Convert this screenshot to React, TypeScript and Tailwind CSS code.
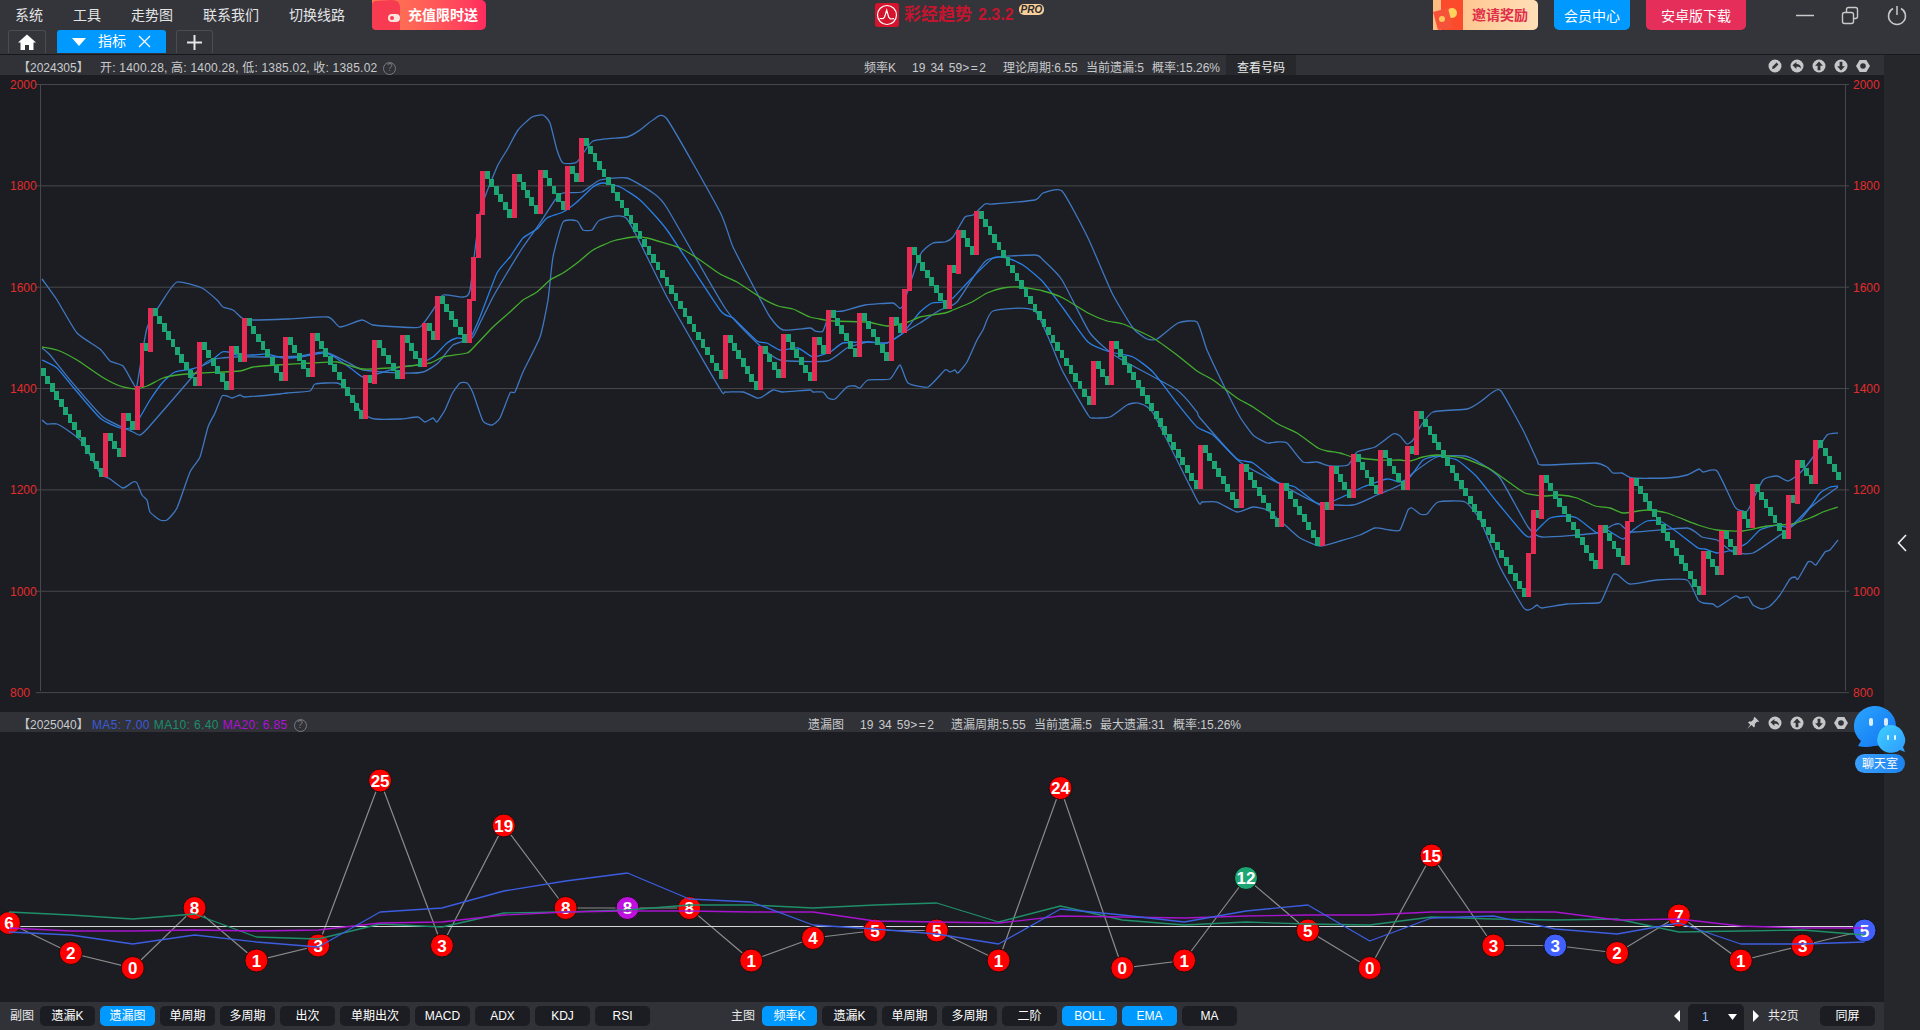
import type { ReactNode } from "react";

// renko bars: [left x, top y] of each rising column, everything falls between them
const RISES: [number, number][] = [
  [103.3, 433], [121.3, 413], [135, 386], [139.5, 343], [148.3, 308], [197, 342], [229, 346], [242.3, 318],
  [283.3, 337], [310, 333], [363, 375], [372, 340], [400, 335], [422, 323], [435, 296], [467, 299],
  [471.3, 257], [476, 214], [480.3, 171], [512, 174], [538, 170], [565, 166], [579, 138], [723, 335],
  [758, 346], [781, 334], [812, 337], [826, 310], [857, 313], [889, 317], [902, 289], [907, 247],
  [947, 265], [956, 230], [974, 211], [1091, 361], [1109, 341], [1198, 445], [1239, 464], [1279, 483],
  [1320, 502], [1329, 466], [1351, 454], [1378, 450], [1405, 446], [1414, 411], [1526, 553], [1531, 510],
  [1539, 475], [1598, 525], [1625, 521], [1629.3, 478], [1701, 551], [1719, 531], [1737, 511], [1750, 484],
  [1786, 495], [1795, 460], [1813, 440],
];
const COL = 4.55;
const RISE_H = 43.7;
const STEP_H = 8.4;

function fallingCols(fromX: number, fromTop: number, toX: number, toBottom: number) {
  const count = Math.round((toX - fromX) / COL);
  const cols: { x: number; y: number }[] = [];
  for (let i = 0; i < count; i++) {
    const t = count > 1 ? i / (count - 1) : 0;
    cols.push({ x: fromX + (i * (toX - fromX)) / count, y: fromTop + t * (toBottom - STEP_H - fromTop) });
  }
  return cols;
}

const FALLS = [
  ...fallingCols(40.7, 368, RISES[0][0], RISES[0][1] + RISE_H),
  ...RISES.slice(0, -1).flatMap(([x, top], i) =>
    fallingCols(x + COL, top, RISES[i + 1][0], RISES[i + 1][1] + RISE_H),
  ),
  ...fallingCols(1818, 440, 1841, 480),
];

// light catmull-rom through the traced points, tight enough to keep the band corners
function smooth(points: string) {
  const k = 11;
  const p = points.split(" ").map((s) => s.split(",").map(Number));
  let d = `M${p[0][0]} ${p[0][1]}`;
  for (let i = 0; i < p.length - 1; i++) {
    const a = p[Math.max(i - 1, 0)];
    const b = p[i];
    const c = p[i + 1];
    const e = p[Math.min(i + 2, p.length - 1)];
    d += `C${b[0] + (c[0] - a[0]) / k} ${b[1] + (c[1] - a[1]) / k} ${c[0] - (e[0] - b[0]) / k} ${c[1] - (e[1] - b[1]) / k} ${c[0]} ${c[1]}`;
  }
  return d;
}

const UPPER =
  "42,279 57,300 77,333 100,349 110,361 123,366 133,383 137,385 147,328 163,300 177,282 202,288 217,300 223,307 233,310 242,318 250,320 287,319 328,317 340,327 362,320 373,325 400,327 420,327 433,310 443,295 463,297 470,290 480,213 497,167 507,150 518,130 532,117 543,115 550,123 557,150 563,163 577,162 593,141 627,137 640,130 653,120 667,119 720,212 733,247 758,295 770,317 783,330 810,328 815,331 823,331 830,313 843,311 865,305 893,303 902,307 920,255 933,243 945,242 953,237 965,217 973,215 985,204 993,204 1035,200 1043,193 1062,191 1088,238 1112,293 1133,328 1147,339 1157,339 1178,323 1197,322 1207,350 1225,388 1240,417 1253,435 1267,443 1277,442 1287,443 1303,462 1317,462 1330,466 1348,465 1357,452 1375,447 1393,434 1400,436 1407,444 1413,440 1420,427 1433,412 1467,409 1480,402 1493,392 1501,391 1523,430 1537,460 1542,465 1595,463 1607,467 1613,473 1622,473 1632,478 1667,478 1687,475 1699,469 1703,472 1717,471 1735,507 1743,511 1748,510 1763,480 1777,476 1788,481 1800,473 1813,457 1827,435 1838,433";
const LOWER =
  "42,420 47,424 57,424 70,432 83,443 100,473 110,479 123,488 133,482 137,483 142,495 147,500 150,512 160,520 167,520 177,508 190,472 200,457 208,427 215,413 222,396 227,396 232,398 240,395 245,397 280,394 287,393 310,391 315,384 337,383 347,390 362,413 375,419 400,419 418,417 425,422 433,418 437,422 445,410 452,394 460,383 467,383 473,393 483,421 492,425 500,418 510,393 515,392 523,372 540,337 548,300 553,257 563,222 577,221 583,230 592,230 600,220 627,219 667,297 720,389 725,392 743,392 757,398 762,397 773,390 783,392 810,390 813,392 823,392 828,398 835,399 847,387 855,386 860,388 868,380 890,379 900,365 908,383 928,387 945,370 950,372 955,370 958,373 967,362 977,340 983,330 993,311 1035,311 1062,370 1088,415 1093,418 1110,417 1127,405 1138,403 1153,413 1197,500 1202,502 1217,502 1237,512 1253,507 1267,510 1285,525 1300,538 1320,546 1340,541 1360,535 1375,528 1390,530 1400,530 1408,510 1412,508 1420,514 1427,514 1438,502 1465,502 1480,520 1500,567 1523,607 1528,610 1533,608 1537,605 1542,608 1567,604 1597,603 1602,600 1613,575 1618,575 1630,584 1657,580 1687,580 1698,600 1703,603 1713,604 1718,607 1735,596 1740,598 1748,597 1753,605 1762,609 1770,606 1780,595 1790,579 1795,577 1798,579 1808,562 1812,562 1816,565 1825,552 1830,550 1838,540";
const MID_A =
  "42,360 57,368 73,387 100,418 120,428 130,428 140,417 150,400 163,382 175,372 192,369 208,363 222,352 228,352 237,355 253,355 267,354 283,358 300,357 323,353 333,356 353,370 363,377 377,374 400,367 417,365 433,357 447,343 457,338 470,338 480,317 497,273 510,257 523,238 537,229 547,218 563,212 577,202 593,187 603,183 620,187 640,200 667,230 720,310 733,318 757,341 767,343 780,350 798,348 813,357 830,352 843,343 868,342 887,343 903,333 920,312 932,303 945,302 953,298 970,280 993,258 1007,258 1023,265 1043,282 1063,308 1088,342 1110,352 1133,357 1153,372 1177,403 1197,427 1213,435 1237,459 1253,463 1277,482 1295,487 1320,505 1340,498 1363,487 1387,479 1400,482 1410,477 1423,460 1437,456 1457,460 1477,477 1497,502 1523,533 1530,537 1540,527 1550,518 1563,516 1577,518 1597,533 1607,530 1623,539 1633,530 1647,521 1660,521 1677,532 1698,548 1705,549 1717,553 1733,550 1747,543 1760,530 1777,525 1790,527 1810,507 1820,493 1830,487 1838,486";
const MID_B =
  "42,348 50,355 70,380 103,417 133,432 140,435 148,428 187,383 200,368 210,360 233,357 267,357 300,356 325,352 347,362 363,370 400,373 423,372 438,363 453,345 472,338 480,323 493,297 507,273 523,247 540,223 555,200 563,193 582,192 600,180 627,178 653,193 667,208 725,308 757,343 780,360 827,361 847,348 868,342 887,343 903,333 920,323 940,310 957,302 987,260 1035,255 1043,260 1062,280 1090,333 1117,357 1177,390 1197,412 1200,418 1240,462 1278,483 1317,503 1353,505 1377,495 1400,485 1413,473 1437,457 1465,456 1480,463 1500,478 1528,527 1542,537 1597,533 1613,525 1620,524 1632,532 1687,528 1702,537 1717,540 1733,552 1753,553 1783,533 1800,520 1810,508 1820,500 1838,487";
const SLOW =
  "42,347 57,350 77,360 102,377 120,386 135,389 147,386 163,378 177,375 200,373 240,371 253,367 277,365 313,363 337,362 363,369 400,367 430,363 443,357 467,353 473,348 493,327 510,312 523,300 537,292 550,280 563,273 577,263 593,250 613,241 633,237 647,238 680,248 700,260 720,274 737,282 760,297 778,306 793,309 810,317 833,321 867,322 888,326 908,322 920,317 945,313 953,310 972,302 987,293 1003,288 1020,287 1043,291 1063,298 1088,313 1107,321 1123,324 1153,338 1177,355 1197,371 1213,380 1237,398 1253,407 1278,424 1297,433 1318,448 1327,451 1340,453 1353,457 1378,460 1400,460 1410,461 1423,457 1437,455 1463,458 1490,469 1510,483 1525,493 1543,496 1560,495 1577,498 1595,506 1610,508 1623,513 1647,510 1667,513 1698,525 1717,530 1743,531 1767,526 1792,524 1810,518 1823,512 1838,507";

const PRICE_TICKS = [2000, 1800, 1600, 1400, 1200, 1000, 800];

const OMISSIONS = [6, 2, 0, 8, 1, 3, 25, 3, 19, 8, 8, 8, 1, 4, 5, 5, 1, 24, 0, 1, 12, 5, 0, 15, 3, 3, 2, 7, 1, 3, 5];
const NODE_COLORS: Record<number, string> = { 10: "#c010e0", 20: "#1ea574", 25: "#4060ff", 30: "#4060ff" };
const nodeX = (i: number) => 9 + 61.85 * i;
const nodeY = (v: number) => 968 - 7.5 * v;

const MA5 = [932, 935, 944, 935, 942, 947, 912, 908, 891, 881, 873, 899, 902, 925, 929, 934, 944, 909, 915, 922, 911, 905, 941, 918, 916, 929, 934, 923, 944, 944, 942];
const MA10 = [912, 915, 919, 914, 937, 939, 924, 927, 913, 912, 910, 905, 905, 908, 905, 903, 922, 906, 920, 925, 922, 924, 925, 917, 919, 920, 919, 932, 931, 930, 935];
const MA20 = [928, 931, 931, 930, 931, 930, 923, 922, 915, 912, 911, 911, 912, 912, 921, 922, 923, 916, 917, 918, 916, 915, 915, 912, 912, 912, 920, 919, 926, 928, 928];
const toPoints = (ys: number[]) => ys.map((y, i) => `${nodeX(i)},${y}`).join(" ");

const SUB_TABS = [
  { label: "遗漏K", w: "w-[55px]" },
  { label: "遗漏图", w: "w-[55px]", on: true },
  { label: "单周期", w: "w-[55px]" },
  { label: "多周期", w: "w-[55px]" },
  { label: "出次", w: "w-[55px]" },
  { label: "单期出次", w: "w-[70px]" },
  { label: "MACD", w: "w-[55px]" },
  { label: "ADX", w: "w-[55px]" },
  { label: "KDJ", w: "w-[55px]" },
  { label: "RSI", w: "w-[55px]" },
];
const MAIN_TABS = [
  { label: "频率K", on: true },
  { label: "遗漏K" },
  { label: "单周期" },
  { label: "多周期" },
  { label: "二阶" },
  { label: "BOLL", on: true },
  { label: "EMA", on: true },
  { label: "MA" },
];

function ChipButton({ label, on, w = "w-[55px]" }: { label: string; on?: boolean; w?: string }) {
  return (
    <div
      className={`flex h-[20px] ${w} items-center justify-center rounded-[5px] text-[12px] text-white ${
        on ? "bg-[#0099ff]" : "bg-[#1c1d22]"
      }`}
    >
      {label}
    </div>
  );
}

function RoundIcon({ children }: { children: ReactNode }) {
  return (
    <svg width="14" height="14" viewBox="0 0 14 14" className="shrink-0">
      <circle cx="7" cy="7" r="6.5" fill="#c6c7c9" />
      {children}
    </svg>
  );
}

const PenIcon = () => (
  <RoundIcon>
    <path d="M4 10l.6-2.4L8.6 3.6l1.8 1.8-4 4z" fill="#303237" />
  </RoundIcon>
);
const BackIcon = () => (
  <RoundIcon>
    <path d="M2.5 6.2L6.4 3v2.1c3 0 4.6 1.7 4.8 4.7-1-1.6-2.6-2.1-4.8-2v2.1z" fill="#303237" />
  </RoundIcon>
);
const UpIcon = () => (
  <RoundIcon>
    <path d="M7 2.6l3.9 4.1H8.4v4.5H5.6V6.7H3.1z" fill="#303237" />
  </RoundIcon>
);
const DownIcon = () => (
  <RoundIcon>
    <path d="M7 11.4l3.9-4.1H8.4V2.8H5.6v4.5H3.1z" fill="#303237" />
  </RoundIcon>
);
const GearIcon = () => (
  <svg width="14" height="14" viewBox="0 0 14 14" className="shrink-0">
    <path d="M3.7 1h6.6L14 7l-3.7 6H3.7L0 7z" fill="#c6c7c9" />
    <circle cx="7" cy="7" r="2.8" fill="#303237" />
  </svg>
);
const PinIcon = () => (
  <svg width="14" height="14" viewBox="0 0 14 14" className="shrink-0">
    <path d="M8.6.8l4.6 4.6-1.2.6-.9-.4-2.3 2.4.2 2.3-1.1 1.1-2.3-2.4L1 13l3.300-4.200L2 6.500l1.100-1.100 2.300.2L7.800 3.300l-.3-.9z" fill="#c6c7c9" />
  </svg>
);

function HelpDot() {
  return (
    <span className="flex h-[13px] w-[13px] items-center justify-center rounded-full border border-[#77797c] text-[10px] leading-none text-[#77797c]">
      ?
    </span>
  );
}

function TopBar() {
  return (
    <header className="h-[54px] shrink-0 bg-[#33353a]">
      <div className="flex h-[30px]">
        <nav className="flex w-[875px] shrink-0 items-center text-[14px] text-[#e4e4e5]">
          <span className="ml-[15px]">系统</span>
          <span className="ml-[30px]">工具</span>
          <span className="ml-[30px]">走势图</span>
          <span className="ml-[30px]">联系我们</span>
          <span className="ml-[30px]">切换线路</span>
          <div className="ml-[27px] flex h-[30px] w-[114px] items-center rounded-b-[5px] rounded-tr-[5px] bg-gradient-to-r from-[#ff7d50] to-[#ff2a5e]">
            <svg width="28" height="30" viewBox="0 0 28 30" className="shrink-0">
              <path d="M0 4Q0 2 3 1L20 0Q27 0 28 6V30H4Q0 30 0 26z" fill="#f73c52" />
              <rect x="16" y="14" width="12" height="8" rx="4" fill="#fde3dd" />
              <circle cx="20" cy="18" r="2" fill="#f73c52" />
            </svg>
            <span className="ml-[8px] text-[14px] font-bold text-white">充值限时送</span>
          </div>
        </nav>
        <div className="flex flex-1 items-center">
          <svg width="24" height="24" viewBox="0 0 24 24" className="shrink-0">
            <rect width="24" height="24" rx="3" fill="#d4142c" />
            <circle cx="12" cy="12" r="9.500" fill="none" stroke="#fff" strokeWidth="1.200" />
            <path d="M4.500 15.500l3.500.2 1.500-1.500 2.200-7 2 7 1.700 1.800 3.700-.3" fill="none" stroke="#fff" strokeWidth="1.200" />
          </svg>
          <span className="ml-[5px] text-[17px] font-bold text-[#c5142f]">彩经趋势</span>
          <span className="ml-[6px] text-[16px] font-bold text-[#c5142f]">2.3.2</span>
          <span className="mb-[11px] ml-[5px] rounded-[5px] bg-[#f8cf9a] px-[2px] text-[10px] font-bold italic leading-[11px] text-[#2c2c2c]">
            PRO
          </span>
        </div>
        <div className="flex items-center">
          <div className="relative flex h-[30px] w-[105px] items-center justify-end rounded-r-[5px] bg-gradient-to-r from-[#ffbc80] to-[#ffdfb8] pr-[10px]">
            <svg width="32" height="30" viewBox="0 0 32 30" className="absolute left-0 top-0">
              <path d="M8 0h22v30H8z" fill="#fb4b2c" />
              <circle cx="19" cy="13" r="5" fill="#ffd25e" />
              <path d="M0 12l15-4 5 20-15 2z" fill="#f6523a" />
              <circle cx="9" cy="19" r="3" fill="#ffc75a" />
            </svg>
            <span className="text-[14px] font-bold text-[#df2f4a]">邀请奖励</span>
          </div>
          <div className="ml-[16px] flex h-[30px] w-[76px] items-center justify-center rounded-b-[5px] bg-[#0099ff] pt-[2px] text-[14px] text-white">
            会员中心
          </div>
          <div className="ml-[16px] flex h-[30px] w-[100px] items-center justify-center rounded-b-[5px] bg-[#e62e5a] pt-[2px] text-[14px] text-white">
            安卓版下载
          </div>
          <svg width="174" height="30" viewBox="0 0 174 30" className="shrink-0">
            <path d="M50 15.500h18" stroke="#c9c9ca" strokeWidth="1.500" />
            <rect x="96.500" y="12.500" width="11" height="11" rx="2" fill="none" stroke="#c9c9ca" strokeWidth="1.400" />
            <path d="M100.500 12V9.500q0-2 2-2h7q2 0 2 2v7q0 2-2 2H108" fill="none" stroke="#c9c9ca" strokeWidth="1.400" />
            <path d="M147 8.500a8.500 8.500 0 1 0 8 0M151 6v9" fill="none" stroke="#c9c9ca" strokeWidth="1.500" />
          </svg>
        </div>
      </div>
      <div className="flex h-[23px] items-stretch pl-[8px]">
        <div className="flex w-[38px] items-center justify-center rounded-t-[3px] border border-b-0 border-[#4a4c50]">
          <svg width="18" height="16" viewBox="0 0 18 16">
            <path d="M9 0.500L18 8.500h-2.500V16h-4.500v-5H7v5H2.500V8.500H0z" fill="#fff" />
          </svg>
        </div>
        <div className="ml-[11px] flex w-[109px] items-center rounded-t-[3px] bg-[#0099ff] pl-[15px] text-[14px] text-white">
          <svg width="14" height="8" viewBox="0 0 14 8">
            <path d="M0 0h14L7 8z" fill="#fff" />
          </svg>
          <span className="ml-[12px]">指标</span>
          <svg width="13" height="13" viewBox="0 0 13 13" className="ml-[12px]">
            <path d="M1 1l11 11M12 1L1 12" stroke="#fff" strokeWidth="1.300" />
          </svg>
        </div>
        <div className="ml-[10px] flex w-[37px] items-center justify-center rounded-t-[3px] border border-b-0 border-[#4a4c50]">
          <svg width="15" height="15" viewBox="0 0 15 15">
            <path d="M7.500 0v15M0 7.500h15" stroke="#e6e6e6" strokeWidth="2" />
          </svg>
        </div>
      </div>
    </header>
  );
}

function PriceChart() {
  return (
    <svg viewBox="0 75 1884 637" className="block h-[637px] w-[1884px] bg-[#1c1d22]">
      {PRICE_TICKS.map((tick, i) => {
        const y = 84.5 + i * 101.35;
        return (
          <g key={tick}>
            <line x1="36" x2="1849" y1={y} y2={y} stroke="#47484c" strokeWidth="1" />
            <text x="10" y={y + 4.5} fill="#e02c2c" fontSize="12">
              {tick}
            </text>
            <text x="1853" y={y + 4.5} fill="#e02c2c" fontSize="12">
              {tick}
            </text>
          </g>
        );
      })}
      <line x1="40.500" x2="40.500" y1="84" y2="691" stroke="#47484c" />
      <line x1="1845.500" x2="1845.500" y1="84" y2="691" stroke="#47484c" />

      <g fill="none" strokeLinejoin="round" strokeWidth="1.300">
        <path d={smooth(UPPER)} stroke="#3f78c2" />
        <path d={smooth(LOWER)} stroke="#3f78c2" />
        <path d={smooth(MID_B)} stroke="#3f78c2" />
        <path d={smooth(MID_A)} stroke="#2a7fe4" />
        <path d={smooth(SLOW)} stroke="#43ad2f" />
      </g>

      <g shapeRendering="crispEdges">
        {FALLS.map((c) => (
          <rect key={`${c.x}-${c.y}`} x={c.x} y={c.y} width={COL + 0.4} height={STEP_H} fill="#1ea574" />
        ))}
        {RISES.map(([x, top]) => (
          <rect key={x} x={x} y={top} width={COL + 0.3} height={RISE_H} fill="#e62c55" />
        ))}
      </g>
    </svg>
  );
}

function OmissionChart() {
  return (
    <svg viewBox="0 732 1884 270" className="block h-[270px] w-[1884px] bg-[#1c1d22]">
      <polyline
        points={toPoints(OMISSIONS.map(nodeY))}
        fill="none"
        stroke="#8b8b8c"
        strokeWidth="1.200"
      />
      <line x1="9" x2="1863" y1="926.500" y2="926.500" stroke="#d8d8d8" strokeWidth="1.200" />
      {OMISSIONS.map((v, i) => (
        <g key={i}>
          <circle cx={nodeX(i)} cy={nodeY(v)} r="11.500" fill={NODE_COLORS[i] ?? "#ff0000"} stroke="#111" strokeWidth="1" />
          <text
            x={nodeX(i)}
            y={nodeY(v) + 6}
            textAnchor="middle"
            fontSize="17"
            fontWeight="700"
            fill="#fff"
          >
            {v}
          </text>
        </g>
      ))}
      <g fill="none" strokeWidth="1.300" strokeLinejoin="round">
        <polyline points={toPoints(MA10)} stroke="#1f8f6a" />
        <polyline points={toPoints(MA20)} stroke="#a814d0" />
        <polyline points={toPoints(MA5)} stroke="#3c5de0" />
      </g>
    </svg>
  );
}

function ChatWidget() {
  return (
    <div className="absolute left-[1855px] top-[651px] flex w-[50px] flex-col items-center">
      <svg width="52" height="47" viewBox="0 0 52 47" className="block">
        <defs>
          <linearGradient id="chatBig" x1="0" y1="0" x2="1" y2="1">
            <stop offset="0" stopColor="#2aa5ff" />
            <stop offset="1" stopColor="#1273f0" />
          </linearGradient>
          <linearGradient id="chatSmall" x1="0" y1="0" x2="1" y2="1">
            <stop offset="0" stopColor="#3ed0ff" />
            <stop offset="1" stopColor="#2f9cff" />
          </linearGradient>
        </defs>
        <path d="M4 40l3-5A21 20 0 1 1 20 40 30 30 0 0 1 4 40z" fill="url(#chatBig)" />
        <rect x="15" y="12" width="4" height="8" rx="2" fill="#dcecff" />
        <rect x="30" y="12" width="4" height="8" rx="2" fill="#dcecff" />
        <path d="M51 46l-5-2a14 12.500 0 1 1 3-3z" fill="url(#chatSmall)" />
        <circle cx="37" cy="32" r="13" fill="url(#chatSmall)" />
        <rect x="33" y="29" width="2" height="5" rx="1" fill="#e4f6ff" />
        <rect x="40" y="29" width="2" height="5" rx="1" fill="#e4f6ff" />
      </svg>
      <div className="mt-[1px] flex h-[19px] w-[50px] items-center justify-center rounded-full bg-gradient-to-r from-[#3aa0ff] to-[#1c84ee] text-[12px] text-white">
        聊天室
      </div>
    </div>
  );
}

export default function App() {
  return (
    <div className="flex h-[1030px] w-[1920px] flex-col overflow-hidden bg-[#25272b] font-['Liberation_Sans','Noto_Sans_CJK_SC',sans-serif]">
      <TopBar />
      <div className="h-px shrink-0 bg-[#17181b]" />
      <div className="relative flex flex-1">
        <main className="flex w-[1884px] shrink-0 flex-col">
          <div className="flex h-[20px] items-center overflow-hidden bg-[#303237] text-[12px] text-[#c9cacc]">
            <div className="flex w-[864px] shrink-0 items-center pl-[18px] pt-[6px]">
              <span className="w-[82px] whitespace-pre">【2024305】</span>
              <span className="tracking-[0.2px]">开: 1400.28, 高: 1400.28, 低: 1385.02, 收: 1385.02</span>
              <span className="ml-[6px]">
                <HelpDot />
              </span>
            </div>
            <span className="w-[48px] pt-[6px]">频率K</span>
            <span className="w-[91px] pt-[6px] [word-spacing:1.700px]">
              19 34 59<span className="tracking-[1.500px]">&gt;=2</span>
            </span>
            <span className="w-[83px] pt-[6px]">理论周期:6.55</span>
            <span className="w-[66px] pt-[6px]">当前遗漏:5</span>
            <span className="w-[74px] pt-[6px]">概率:15.26%</span>
            <span className="flex h-[20px] w-[70px] items-end justify-center bg-[#26282c] leading-[14px] text-[#e8e8e8]">查看号码</span>
            <div className="ml-auto flex items-center gap-[8px] pr-[14px] pt-[2px]">
              <PenIcon />
              <BackIcon />
              <UpIcon />
              <DownIcon />
              <GearIcon />
            </div>
          </div>
          <PriceChart />
          <div className="flex h-[20px] items-center overflow-hidden bg-[#303237] text-[12px] text-[#c9cacc]">
            <div className="flex w-[808px] shrink-0 items-center pl-[18px] pt-[6px]">
              <span className="w-[74px] whitespace-pre">【2025040】</span>
              <span className="tracking-[0.35px] text-[#3a5ad9]">MA5: 7.00</span>
              <span className="ml-[4px] tracking-[0.35px] text-[#1a8f6b]">MA10: 6.40</span>
              <span className="ml-[4px] tracking-[0.35px] text-[#b010d8]">MA20: 6.85</span>
              <span className="ml-[6px]">
                <HelpDot />
              </span>
            </div>
            <span className="w-[52px] pt-[6px]">遗漏图</span>
            <span className="w-[91px] pt-[6px] [word-spacing:1.700px]">
              19 34 59<span className="tracking-[1.500px]">&gt;=2</span>
            </span>
            <span className="w-[83px] pt-[6px]">遗漏周期:5.55</span>
            <span className="w-[66px] pt-[6px]">当前遗漏:5</span>
            <span className="w-[73px] pt-[6px]">最大遗漏:31</span>
            <span className="w-[70px] pt-[6px]">概率:15.26%</span>
            <div className="ml-auto flex items-center gap-[8px] pr-[36px] pt-[2px]">
              <PinIcon />
              <BackIcon />
              <UpIcon />
              <DownIcon />
              <GearIcon />
            </div>
          </div>
          <OmissionChart />
          <footer className="flex h-[28px] items-center bg-[#303237] pl-[10px] text-[12px] text-[#e8e8e8]">
            <span className="w-[30px]">副图</span>
            <div className="flex gap-[5px]">
              {SUB_TABS.map((t) => (
                <ChipButton key={t.label} label={t.label} on={t.on} w={t.w} />
              ))}
            </div>
            <span className="ml-[81px] w-[31px]">主图</span>
            <div className="flex gap-[5px]">
              {MAIN_TABS.map((t) => (
                <ChipButton key={t.label} label={t.label} on={t.on} />
              ))}
            </div>
            <svg width="6" height="12" viewBox="0 0 6 12" className="ml-[437px] shrink-0">
              <path d="M6 0v12L0 6z" fill="#fff" />
            </svg>
            <div className="ml-[8px] flex h-[26px] w-[56px] items-center justify-between self-end rounded-t-[5px] bg-[#1c1d22] pl-[14px] pr-[7px] text-[#9cc8ff]">
              <span>1</span>
              <svg width="9" height="6" viewBox="0 0 9 6">
                <path d="M0 0h9L4.500 6z" fill="#fff" />
              </svg>
            </div>
            <svg width="6" height="12" viewBox="0 0 6 12" className="ml-[9px] shrink-0">
              <path d="M0 0v12l6-6z" fill="#fff" />
            </svg>
            <span className="ml-[9px] w-[52px]">共2页</span>
            <ChipButton label="同屏" />
          </footer>
        </main>
        <aside className="flex flex-1 items-center justify-center">
          <svg width="10" height="18" viewBox="0 0 10 18">
            <path d="M9 1L1.500 9 9 17" fill="none" stroke="#f0f0f0" strokeWidth="1.600" />
          </svg>
        </aside>
        <ChatWidget />
      </div>
    </div>
  );
}
